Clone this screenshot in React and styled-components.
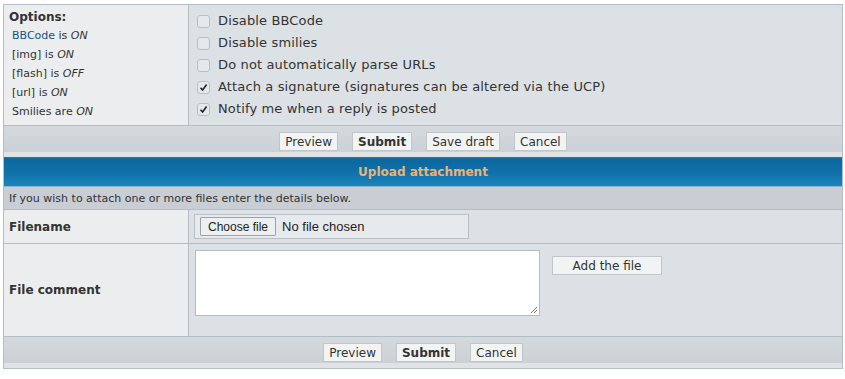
import styled, { createGlobalStyle } from "styled-components";

const GlobalStyle = createGlobalStyle`
  body {
    margin: 0;
    background: #ffffff;
    font-family: "DejaVu Sans", Verdana, sans-serif;
  }
`;

const Page = styled.div`
  padding: 4px 3px 0 3px;
`;

const Panel = styled.div`
  border: 1px solid #b3bdc5;
  border-top: none;
  width: 838px;
`;

const Row = styled.div`
  display: grid;
  grid-template-columns: 185px 1fr;
  border-top: 1px solid #b3bdc5;
  min-height: ${(p) => p.h}px;
`;

const LabelCell = styled.div`
  background: #ecedee;
  border-right: 1px solid #b3bdc5;
  padding: ${(p) => (p.center ? "0 5px" : "5px 5px")};
  display: flex;
  flex-direction: column;
  justify-content: ${(p) => (p.center ? "center" : "flex-start")};
  color: #333;
`;

const FieldCell = styled.div`
  background: #dce1e5;
  padding: ${(p) => p.pad || "0"};
  display: flex;
  align-items: ${(p) => p.align || "center"};
  gap: ${(p) => p.gap || 0}px;
`;

const Label = styled.div`
  font-size: 12px;
  font-weight: bold;
  color: #333;
`;

const OptionList = styled.div`
  display: flex;
  flex-direction: column;
  gap: 5px;
  margin-top: 5px;
  padding-left: 3px;
`;

const OptionNote = styled.div`
  font-size: 11px;
  line-height: 14px;
  color: #333;
  em {
    font-style: italic;
  }
`;

const Link = styled.span`
  color: #105289;
`;

const CheckList = styled.div`
  display: flex;
  flex-direction: column;
  gap: 4px;
  padding: 7px 0 0 8px;
`;

const CheckRow = styled.label`
  display: flex;
  align-items: center;
  gap: 8px;
  font-size: 13px;
  line-height: 18px;
  letter-spacing: 0.14px;
  color: #333;
`;

const Box = styled.span`
  width: 11px;
  height: 11px;
  border: 1px solid #b9bfc4;
  border-radius: 3px;
  background: #e4e8eb;
  display: flex;
  align-items: center;
  justify-content: center;
`;

const ButtonBar = styled.div`
  border-top: 1px solid #b3bdc5;
  background: linear-gradient(#d4d9dd, #cbd1d6 85%, #dfe3e6 85%);
  height: ${(p) => p.h}px;
  display: flex;
  justify-content: center;
  align-items: flex-start;
  padding-top: 6px;
  gap: 14px;
  box-sizing: border-box;
`;

const Button = styled.button`
  font-family: "DejaVu Sans", Verdana, sans-serif;
  font-size: 12px;
  font-weight: ${(p) => (p.primary ? "bold" : "normal")};
  color: #333;
  background: #f2f3f3;
  border: 1px solid #c0c6cb;
  height: 19px;
  padding: 0 ${(p) => p.px || 5}px;
  width: ${(p) => (p.w ? `${p.w}px` : "auto")};
  margin-top: ${(p) => p.mt || 0}px;
  line-height: 16px;
`;

const Header = styled.div`
  height: 30px;
  background: linear-gradient(#1f7fb2 0px, #0b689f 2px, #106fa6 50%, #1a85bd 100%);
  border-bottom: 1px solid #8fb3cc;
  color: #eab37a;
  font-weight: bold;
  font-size: 12px;
  display: flex;
  align-items: center;
  justify-content: center;
  box-sizing: border-box;
`;

const Note = styled.div`
  background: #c8ced4;
  height: 22px;
  display: flex;
  align-items: center;
  padding-left: 5px;
  font-size: 11px;
  color: #333;
`;

const FileBox = styled.div`
  width: 268px;
  height: 23px;
  border: 1px solid #b9c0c6;
  background: #e7eaed;
  display: flex;
  align-items: center;
  padding-left: 5px;
  gap: 6px;
  font-family: "Liberation Sans", Arial, sans-serif;
  font-size: 13px;
  color: #222;
`;

const NativeButton = styled.span`
  border: 1px solid #9da3a8;
  background: #eeeff0;
  border-radius: 1px;
  height: 17px;
  padding: 0 7px;
  display: flex;
  align-items: center;
  font-size: 12px;
`;

const TextArea = styled.div`
  width: 343px;
  height: 64px;
  background: #ffffff;
  border: 1px solid #b3bcc3;
  position: relative;
  margin-top: 6px;
`;

const Grip = styled.svg`
  position: absolute;
  right: 1px;
  bottom: 1px;
`;

function Check({ checked }) {
  return (
    <Box>
      {checked && (
        <svg width="9" height="9" viewBox="0 0 9 9">
          <path d="M1.5 4.8 L3.6 7 L7.6 1.6" stroke="#222" strokeWidth="1.6" fill="none" />
        </svg>
      )}
    </Box>
  );
}

const options = [
  { text: "Disable BBCode" },
  { text: "Disable smilies" },
  { text: "Do not automatically parse URLs" },
  { text: "Attach a signature (signatures can be altered via the UCP)", checked: true },
  { text: "Notify me when a reply is posted", checked: true },
];

export default function App() {
  return (
    <Page>
      <GlobalStyle />
      <Panel>
        <Row h={120}>
          <LabelCell>
            <Label>Options:</Label>
            <OptionList>
              <OptionNote>
                <Link>BBCode</Link> is <em>ON</em>
              </OptionNote>
              <OptionNote>
                [img] is <em>ON</em>
              </OptionNote>
              <OptionNote>
                [flash] is <em>OFF</em>
              </OptionNote>
              <OptionNote>
                [url] is <em>ON</em>
              </OptionNote>
              <OptionNote>
                Smilies are <em>ON</em>
              </OptionNote>
            </OptionList>
          </LabelCell>
          <FieldCell align="flex-start">
            <CheckList>
              {options.map((o) => (
                <CheckRow key={o.text}>
                  <Check checked={o.checked} />
                  {o.text}
                </CheckRow>
              ))}
            </CheckList>
          </FieldCell>
        </Row>
        <ButtonBar h={32}>
          <Button>Preview</Button>
          <Button primary>Submit</Button>
          <Button>Save draft</Button>
          <Button>Cancel</Button>
        </ButtonBar>
        <Header>Upload attachment</Header>
        <Note>If you wish to attach one or more files enter the details below.</Note>
        <Row h={33}>
          <LabelCell center>
            <Label>Filename</Label>
          </LabelCell>
          <FieldCell pad="0 0 0 5px">
            <FileBox>
              <NativeButton>Choose file</NativeButton>
              No file chosen
            </FileBox>
          </FieldCell>
        </Row>
        <Row h={92}>
          <LabelCell center>
            <Label>File comment</Label>
          </LabelCell>
          <FieldCell align="flex-start" pad="0 0 0 6px" gap={12}>
            <TextArea>
              <Grip width="8" height="8" viewBox="0 0 8 8">
                <path d="M7 1 L1 7 M7 4 L4 7" stroke="#777" strokeWidth="1" />
              </Grip>
            </TextArea>
            <Button w={110} mt={12}>
              Add the file
            </Button>
          </FieldCell>
        </Row>
        <ButtonBar h={32}>
          <Button>Preview</Button>
          <Button primary>Submit</Button>
          <Button>Cancel</Button>
        </ButtonBar>
      </Panel>
    </Page>
  );
}
